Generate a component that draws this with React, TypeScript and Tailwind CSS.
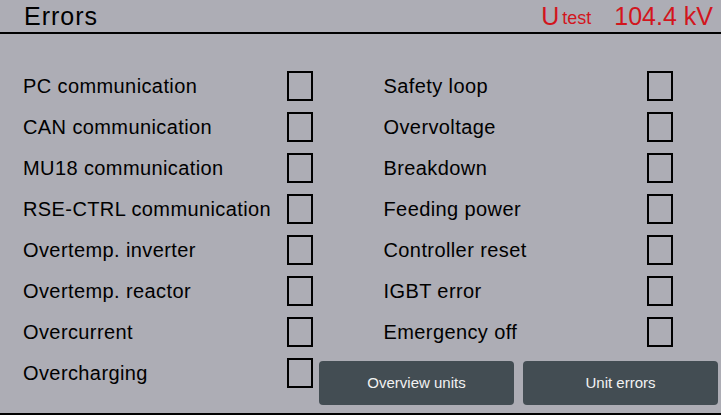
import React from "react";

const left = [
  "PC communication",
  "CAN communication",
  "MU18 communication",
  "RSE-CTRL communication",
  "Overtemp. inverter",
  "Overtemp. reactor",
  "Overcurrent",
];
const right = [
  "Safety loop",
  "Overvoltage",
  "Breakdown",
  "Feeding power",
  "Controller reset",
  "IGBT error",
  "Emergency off",
];

function Row({ label }: { label: string }) {
  return (
    <div className="flex h-[30px] items-center pl-[23px] pr-[48px]">
      <span className="flex-1 text-[20px] leading-[30px] tracking-[0.4px] text-black">{label}</span>
      <div className="h-[30px] w-[26px] border-2 border-black" />
    </div>
  );
}

export default function App() {
  return (
    <div
      className="flex h-[415px] w-[721px] flex-col overflow-hidden bg-[#adadb5]"
      style={{ fontFamily: '"Liberation Sans", Arial, sans-serif' }}
    >
      <div className="flex h-[32px] items-center pl-[24px] pr-[8px]">
        <span className="flex-1 text-[25px] leading-[32px] tracking-[1px] text-black">Errors</span>
        <span className="text-[25px] leading-[32px] text-[#d2151d]">U</span>
        <span className="ml-[3px] mr-[23px] translate-y-[2px] text-[18px] leading-[32px] text-[#d2151d]">test</span>
        <span className="text-[25px] leading-[32px] text-[#d2151d]">104.4 kV</span>
      </div>
      <div className="h-[2px] bg-black" />
      <div className="grid grid-cols-2 pt-[37px]">
        <div className="flex flex-col gap-[11px]">
          {left.map((l) => (
            <Row key={l} label={l} />
          ))}
        </div>
        <div className="flex flex-col gap-[11px]">
          {right.map((l) => (
            <Row key={l} label={l} />
          ))}
        </div>
      </div>
      <div className="mt-[11px] flex items-start">
        <div className="flex h-[30px] w-[313px] items-center pl-[23px]">
          <span className="flex-1 text-[20px] leading-[30px] tracking-[0.4px] text-black">Overcharging</span>
          <div className="h-[30px] w-[26px] border-2 border-black" />
        </div>
        <button className="ml-[6px] mt-[3px] h-[44px] w-[195px] rounded-[4px] bg-[#434d53] text-[15px] text-[#f2f2f2]">
          Overview units
        </button>
        <button className="ml-[9px] mt-[3px] h-[44px] w-[195px] rounded-[4px] bg-[#434d53] text-[15px] text-[#f2f2f2]">
          Unit errors
        </button>
      </div>
      <div className="flex-1" />
      <div className="h-[2px] bg-black" />
    </div>
  );
}
